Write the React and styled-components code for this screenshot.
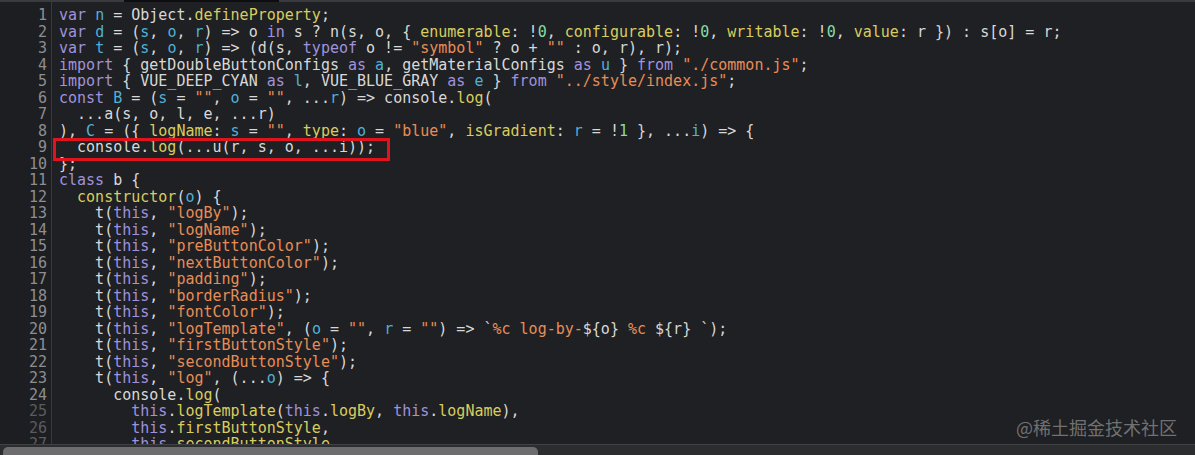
import React from "react";
import styled, { createGlobalStyle } from "styled-components";

const Global = createGlobalStyle`
  html, body { margin: 0; padding: 0; background: #1f2023; }
  #root { width: 1195px; height: 455px; }
`;

const Frame = styled.div`
  width: 1195px;
  height: 455px;
  display: flex;
  flex-direction: column;
  background: #1f2023;
  overflow: hidden;
  position: relative;
`;

const TopStrip = styled.div`
  height: 2px;
  flex: none;
  background: #3a3b3e;
  display: flex;
  padding-left: 124px;
`;

const TopThumb = styled.div`
  width: 155px;
  background: #0e0e10;
`;

const Editor = styled.div`
  flex: 1;
  display: flex;
  overflow: hidden;
  position: relative;
  font-family: "DejaVu Sans Mono", "Liberation Mono", monospace;
  font-size: 15px;
  line-height: 16.5px;
`;

const Gutter = styled.div`
  width: 47px;
  padding: 5px 4px 0 0;
  border-right: 1px solid #38393c;
  background: #1d1e21;
  flex: none;
  text-align: right;
`;

const LineNo = styled.div`
  height: 16.5px;
  color: ${(p) => (p.$dim ? "#5b5c5f" : "#8d8e91")};
`;

const Code = styled.div`
  flex: 1;
  padding: 5px 0 0 7px;
  color: #d8d8d8;
  white-space: pre;
`;

const Line = styled.div`
  height: 16.5px;
`;

const colors = {
  k: "#a092dc",
  v: "#4fb1d8",
  f: "#d8cd5f",
  s: "#e78d57",
  n: "#86dba6",
};

const Tok = styled.span`
  color: ${(p) => colors[p.$t]};
`;

const Highlight = styled.div`
  position: absolute;
  left: 53px;
  top: 136px;
  width: 331px;
  height: 17px;
  border: 3px solid #e0141d;
`;

const Track = styled.div`
  height: 11px;
  flex: none;
  background: #2c2d2f;
  border-top: 1px solid #414245;
  padding: 2px 0 0 3px;
  box-sizing: border-box;
  display: flex;
`;

const Thumb = styled.div`
  width: 535px;
  height: 12px;
  background: #6d6d6f;
  border-radius: 5px;
`;

const Watermark = styled.div`
  position: absolute;
  right: 18px;
  bottom: 18px;
  font-family: "Noto Sans CJK SC", "Noto Sans", sans-serif;
  font-size: 18px;
  line-height: 20px;
  color: rgba(170, 170, 170, 0.6);
`;

const K = (t) => ["k", t];
const V = (t) => ["v", t];
const F = (t) => ["f", t];
const S = (t) => ["s", t];
const N = (t) => ["n", t];

const lines = [
  [K("var"), " ", V("n"), " = Object.", F("defineProperty"), ";"],
  [K("var"), " ", V("d"), " = (", V("s"), ", ", V("o"), ", ", V("r"), ") => o ", K("in"), " s ? n(s, o, { ", F("enumerable"), ": !", N("0"), ", ", F("configurable"), ": !", N("0"), ", ", F("writable"), ": !", N("0"), ", ", F("value"), ": r }) : s[o] = r;"],
  [K("var"), " ", V("t"), " = (", V("s"), ", ", V("o"), ", ", V("r"), ") => (d(s, ", K("typeof"), " o != ", S('"symbol"'), " ? o + ", S('""'), " : o, r), r);"],
  [K("import"), " { getDoubleButtonConfigs ", K("as"), " ", V("a"), ", getMaterialConfigs ", K("as"), " ", V("u"), " } ", K("from"), " ", S('"./common.js"'), ";"],
  [K("import"), " { VUE_DEEP_CYAN ", K("as"), " ", V("l"), ", VUE_BLUE_GRAY ", K("as"), " ", V("e"), " } ", K("from"), " ", S('"../style/index.js"'), ";"],
  [K("const"), " ", V("B"), " = (", V("s"), " = ", S('""'), ", ", V("o"), " = ", S('""'), ", ...", V("r"), ") => console.", F("log"), "("],
  ["  ...a(s, o, l, e, ...r)"],
  ["), ", V("C"), " = ({ ", F("logName"), ": ", V("s"), " = ", S('""'), ", ", F("type"), ": ", V("o"), " = ", S('"blue"'), ", ", F("isGradient"), ": ", V("r"), " = !", N("1"), " }, ...", V("i"), ") => {"],
  ["  console.", F("log"), "(...u(r, s, o, ...i));"],
  ["};"],
  [K("class"), " b {"],
  ["  ", F("constructor"), "(", V("o"), ") {"],
  ["    t(", K("this"), ", ", S('"logBy"'), ");"],
  ["    t(", K("this"), ", ", S('"logName"'), ");"],
  ["    t(", K("this"), ", ", S('"preButtonColor"'), ");"],
  ["    t(", K("this"), ", ", S('"nextButtonColor"'), ");"],
  ["    t(", K("this"), ", ", S('"padding"'), ");"],
  ["    t(", K("this"), ", ", S('"borderRadius"'), ");"],
  ["    t(", K("this"), ", ", S('"fontColor"'), ");"],
  ["    t(", K("this"), ", ", S('"logTemplate"'), ", (", V("o"), " = ", S('""'), ", ", V("r"), " = ", S('""'), ") => `", S("%c log-by-"), "${o}", S(" %c "), "${r} `);"],
  ["    t(", K("this"), ", ", S('"firstButtonStyle"'), ");"],
  ["    t(", K("this"), ", ", S('"secondButtonStyle"'), ");"],
  ["    t(", K("this"), ", ", S('"log"'), ", (...", V("o"), ") => {"],
  ["      console.", F("log"), "("],
  ["        ", K("this"), ".", F("logTemplate"), "(", K("this"), ".", F("logBy"), ", ", K("this"), ".", F("logName"), "),"],
  ["        ", K("this"), ".", F("firstButtonStyle"), ","],
  ["        ", K("this"), ".", F("secondButtonStyle"), ","],
];

export default function App() {
  return (
    <>
      <Global />
      <Frame>
        <TopStrip>
          <TopThumb />
        </TopStrip>
        <Editor>
          <Gutter>
            {lines.map((_, i) => (
              <LineNo key={i} $dim={i >= 24}>
                {i + 1}
              </LineNo>
            ))}
          </Gutter>
          <Code>
            {lines.map((segs, i) => (
              <Line key={i}>
                {segs.map((s, j) =>
                  typeof s === "string" ? (
                    <React.Fragment key={j}>{s}</React.Fragment>
                  ) : (
                    <Tok key={j} $t={s[0]}>
                      {s[1]}
                    </Tok>
                  )
                )}
              </Line>
            ))}
          </Code>
          <Highlight />
        </Editor>
        <Track>
          <Thumb />
        </Track>
        <Watermark>@稀土掘金技术社区</Watermark>
      </Frame>
    </>
  );
}
